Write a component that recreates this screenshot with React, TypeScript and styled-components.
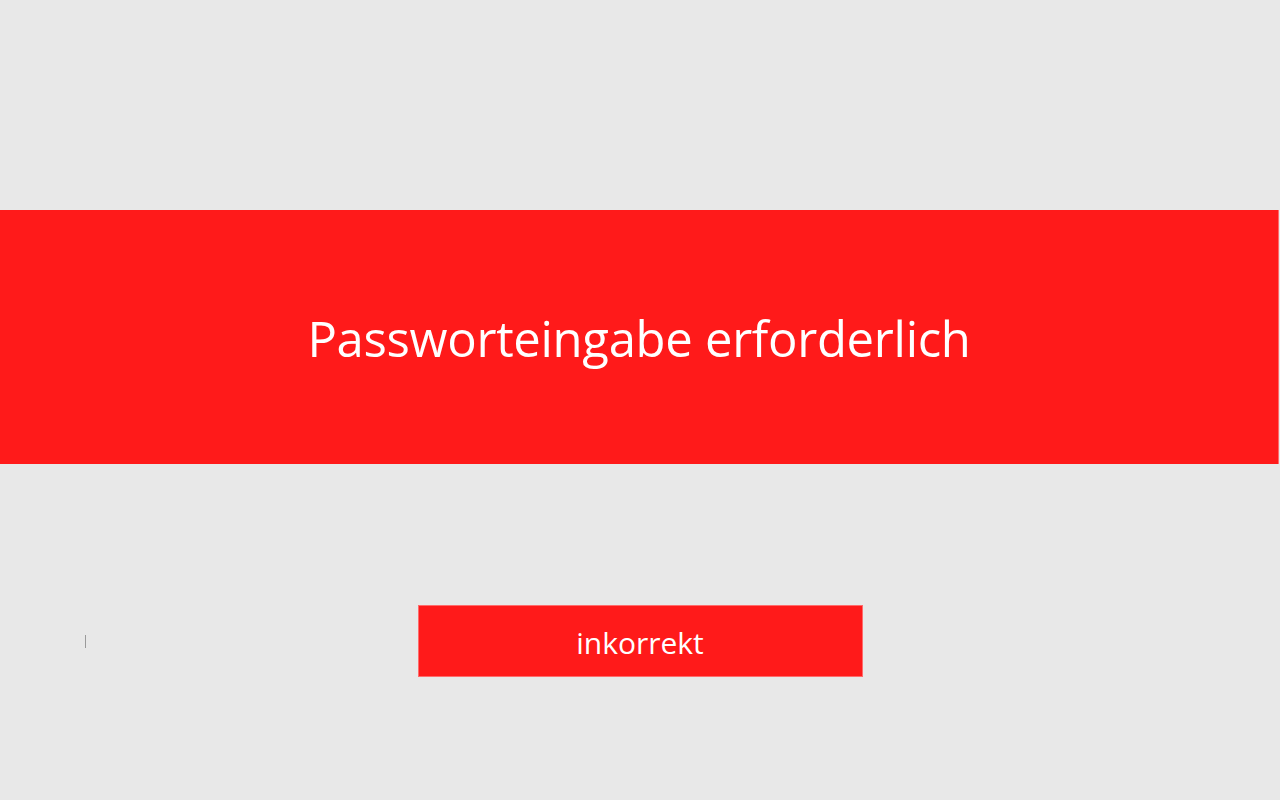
import React from 'react';
import styled, { createGlobalStyle } from 'styled-components';

const GlobalStyle = createGlobalStyle`
  html, body {
    margin: 0;
    padding: 0;
    background: #e8e8e8;
  }
  body {
    font-family: 'Open Sans', 'Noto Sans', sans-serif;
  }
`;

const Page = styled.div`
  width: 1280px;
  height: 800px;
  display: flex;
  flex-direction: column;
  padding-top: 210px;
  box-sizing: border-box;
  background: #e8e8e8;
`;

const Banner = styled.div`
  width: 1279px;
  height: 254px;
  background: #ff1a1a;
  border-right: 1px solid #ff6b6b;
  box-sizing: border-box;
  display: flex;
  align-items: center;
  justify-content: center;
`;

const Title = styled.h1`
  margin: 0;
  color: #ffffff;
  font-weight: 400;
  font-size: 49px;
  letter-spacing: -0.3px;
  padding-top: 2px;
`;

const Row = styled.div`
  margin-top: 141px;
  height: 72px;
  display: grid;
  grid-template-columns: 1fr 445px 1fr;
  align-items: center;
`;

const InputWrap = styled.div`
  padding-left: 85px;
  display: flex;
  align-items: center;
`;

const Caret = styled.span`
  display: block;
  width: 1px;
  height: 13px;
  background: #9a9a9a;
  margin-top: 1px;
`;

const Button = styled.button`
  height: 72px;
  width: 445px;
  background: #ff1a1a;
  border: 1px solid #ff6b6b;
  color: #ffffff;
  font-family: 'Open Sans', 'Noto Sans', sans-serif;
  font-size: 30px;
  padding: 2px 0 0;
  cursor: pointer;
`;

export default function App() {
  return (
    <Page>
      <GlobalStyle />
      <Banner>
        <Title>Passworteingabe erforderlich</Title>
      </Banner>
      <Row>
        <InputWrap>
          <Caret />
        </InputWrap>
        <Button>inkorrekt</Button>
        <div />
      </Row>
    </Page>
  );
}
